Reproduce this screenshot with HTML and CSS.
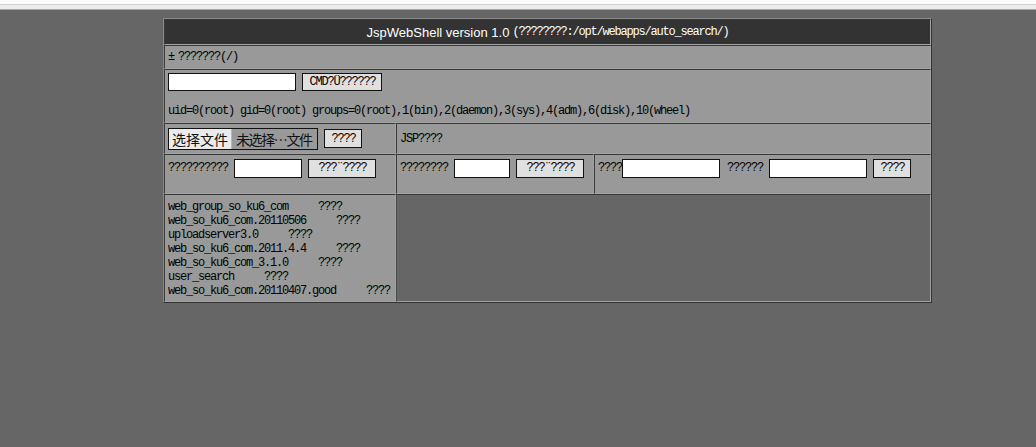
FILE: index.html
```html
<!DOCTYPE html>
<html>
<head>
<meta charset="utf-8">
<title>JspWebShell</title>
<link rel="stylesheet" href="styles.css">
</head>
<body>
<div class="topbar"></div>
<div class="shell">
  <div class="cell head span3"><span class="title">JspWebShell version 1.0</span><span class="mono">(????????:/opt/webapps/auto_search/)</span></div>
  <div class="cell mid span3 mono"><span class="pm">±</span>???????(/)</div>
  <div class="cell cmd span3">
    <div class="line"><span class="input w128"></span><span class="btn w80 mono">CMD?Ü??????</span></div>
    <div class="uid mono">uid=0(root) gid=0(root) groups=0(root),1(bin),2(daemon),3(sys),4(adm),6(disk),10(wheel)</div>
  </div>
  <div class="cell mid">
    <span class="file"><span class="file-btn">选择文件</span><span class="file-name">未选择…文件</span></span><span class="btn w38 h19 mono">????</span>
  </div>
  <div class="cell mid span2 mono">JSP????</div>
  <div class="cell top">
    <span class="mono lbl">??????????</span><span class="input w68"></span><span class="btn w68 mono">???¨????</span>
  </div>
  <div class="cell top">
    <span class="mono lbl">????????</span><span class="input w56"></span><span class="btn w68 mono">???¨????</span>
  </div>
  <div class="cell top">
    <span class="mono">????</span><span class="input w98"></span><span class="mono lbl2">??????</span><span class="input w98"></span><span class="btn w38 mono">????</span>
  </div>
  <div class="cell list mono">
    <div>web_group_so_ku6_com     ????</div>
    <div>web_so_ku6_com.20110506     ????</div>
    <div>uploadserver3.0     ????</div>
    <div>web_so_ku6_com.2011.4.4     ????</div>
    <div>web_so_ku6_com_3.1.0     ????</div>
    <div>user_search     ????</div>
    <div>web_so_ku6_com.20110407.good     ????</div>
  </div>
  <div class="cell empty span2"></div>
</div>
</body>
</html>
```

FILE: styles.css
```css
html, body {
  margin: 0;
  padding: 0;
  background: #666666;
}

.topbar {
  height: 9px;
  background: linear-gradient(#fbfbfb 0 4px, #d2d2d2 4px 5px, #ececec 5px 9px);
  border-bottom: 1px solid #a8a8a8;
}

.shell {
  display: grid;
  grid-template-columns: 232px 198px 337px;
  grid-template-rows: 26px 24px 54px 31px 40px 108px;
  width: 767px;
  margin: 8px 0 0 163px;
  border-top: 1px solid #888888;
  border-left: 1px solid #888888;
  border-bottom: 1px solid #333333;
  border-right: 1px solid #333333;
  color: #000;
}

.cell {
  box-sizing: border-box;
  background: #999999;
  border-top: 1px solid #3a3a3a;
  border-left: 1px solid #3a3a3a;
  border-bottom: 1px solid #a2a2a2;
  border-right: 1px solid #a2a2a2;
  padding: 0 3px;
  display: flex;
  align-items: center;
  min-width: 0;
}

.span3 { grid-column: span 3; }
.span2 { grid-column: span 2; }

.mono {
  font-family: "Liberation Mono", "DejaVu Sans Mono", monospace;
  font-size: 12px;
  letter-spacing: -1.2px;
  white-space: pre;
}

.pm {
  display: inline-block;
  width: 10px;
}

.head {
  background: #333333;
  justify-content: center;
  color: #ffffff;
}

.head .title {
  font-family: "Liberation Sans", Arial, sans-serif;
  font-size: 13px;
  margin-right: 3px;
}

.cmd {
  flex-direction: column;
  align-items: flex-start;
  padding-top: 3px;
}

.line {
  display: flex;
  align-items: center;
}

.uid {
  margin-top: 13px;
}

.input {
  display: inline-block;
  flex: none;
  box-sizing: border-box;
  height: 18px;
  background: #ffffff;
  border: 1px solid #111111;
}

.btn {
  display: inline-flex;
  flex: none;
  align-items: center;
  justify-content: center;
  box-sizing: border-box;
  height: 18px;
  background: #e0e0e0;
  border: 1px solid #111111;
  margin-left: 6px;
  padding-left: 1px;
}

.w128 { width: 128px; }
.w98 { width: 98px; }
.w80 { width: 80px; }
.w68 { width: 68px; }
.w56 { width: 56px; }
.w38 { width: 38px; }
.h19 { height: 19px; }

.file {
  display: inline-flex;
  flex: none;
  align-items: center;
  box-sizing: border-box;
  width: 150px;
  height: 22px;
  border: 1px solid #111111;
  font-family: "Noto Sans CJK SC", sans-serif;
  font-size: 14px;
  line-height: 18px;
  white-space: nowrap;
  overflow: hidden;
}

.file-btn {
  box-sizing: border-box;
  flex: none;
  height: 20px;
  width: 63px;
  background: #ebebeb;
  border-right: 1px solid #b8b8b8;
  display: flex;
  align-items: center;
  justify-content: center;
  color: #111;
}

.file-name {
  margin-left: 4px;
  font-size: 14px;
  letter-spacing: -1.4px;
  color: #111;
}

.top {
  align-items: flex-start;
  padding-top: 4px;
}

.top .input, .top .btn {
  height: 19px;
}

.top .mono {
  line-height: 19px;
}

.lbl { margin-right: 6px; }
.lbl2 { margin: 0 6px 0 7px; }

.list {
  flex-direction: column;
  align-items: flex-start;
  padding-top: 5px;
  line-height: 14px;
}

.empty {
  background: transparent;
  border-left: 1px solid #4a4a4a;
}
```
